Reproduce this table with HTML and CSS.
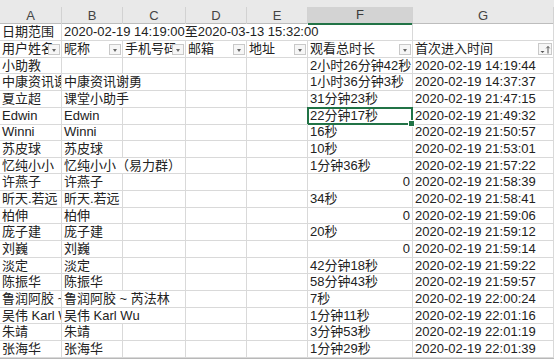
FILE: index.html
```html
<!DOCTYPE html>
<html lang="zh-CN">
<head>
<meta charset="utf-8">
<link rel="stylesheet" href="styles.css">
</head>
<body>
<div class="sheet">
  <div class="colhead">
    <div class="ch">A</div><div class="ch">B</div><div class="ch">C</div><div class="ch">D</div><div class="ch">E</div><div class="ch ch-active">F</div><div class="ch">G</div>
  </div>
  <div class="rows">
    <div class="row"><div class="c">日期范围</div><div class="c span5">2020-02-19 14:19:00至2020-03-13 15:32:00</div><div class="c"></div></div>
    <div class="row">
      <div class="c hdr">用户姓名<span class="filter"></span></div>
      <div class="c hdr">昵称<span class="filter"></span></div>
      <div class="c hdr">手机号码<span class="filter"></span></div>
      <div class="c hdr">邮箱<span class="filter"></span></div>
      <div class="c hdr">地址<span class="filter"></span></div>
      <div class="c hdr">观看总时长<span class="filter"></span></div>
      <div class="c hdr">首次进入时间<span class="filter sorted"><svg width="12" height="11" viewBox="0 0 12 11"><path d="M1.5 7h4l-2 2z" fill="#555"/><path d="M9 9.5V2.5M7.3 4.3L9 2.5l1.7 1.8" fill="none" stroke="#555" stroke-width="1"/></svg></span></div>
    </div>
    <div class="row"><div class="c">小助教</div><div class="c"></div><div class="c"></div><div class="c"></div><div class="c"></div><div class="c">2小时26分钟42秒</div><div class="c">2020-02-19 14:19:44</div></div>
    <div class="row"><div class="c">中康资讯谢勇</div><div class="c span2">中康资讯谢勇</div><div class="c"></div><div class="c"></div><div class="c">1小时36分钟3秒</div><div class="c">2020-02-19 14:37:37</div></div>
    <div class="row"><div class="c">夏立超</div><div class="c span2">课堂小助手</div><div class="c"></div><div class="c"></div><div class="c">31分钟23秒</div><div class="c">2020-02-19 21:47:15</div></div>
    <div class="row"><div class="c">Edwin</div><div class="c">Edwin</div><div class="c"></div><div class="c"></div><div class="c"></div><div class="c selected">22分钟17秒</div><div class="c">2020-02-19 21:49:32</div></div>
    <div class="row"><div class="c">Winni</div><div class="c">Winni</div><div class="c"></div><div class="c"></div><div class="c"></div><div class="c">16秒</div><div class="c">2020-02-19 21:50:57</div></div>
    <div class="row"><div class="c">苏皮球</div><div class="c">苏皮球</div><div class="c"></div><div class="c"></div><div class="c"></div><div class="c">10秒</div><div class="c">2020-02-19 21:53:01</div></div>
    <div class="row"><div class="c">忆纯小小</div><div class="c span2">忆纯小小（易力群）</div><div class="c"></div><div class="c"></div><div class="c">1分钟36秒</div><div class="c">2020-02-19 21:57:22</div></div>
    <div class="row"><div class="c">许燕子</div><div class="c">许燕子</div><div class="c"></div><div class="c"></div><div class="c"></div><div class="c num">0</div><div class="c">2020-02-19 21:58:39</div></div>
    <div class="row"><div class="c">昕天.若远</div><div class="c">昕天.若远</div><div class="c"></div><div class="c"></div><div class="c"></div><div class="c">34秒</div><div class="c">2020-02-19 21:58:41</div></div>
    <div class="row"><div class="c">柏伸</div><div class="c">柏伸</div><div class="c"></div><div class="c"></div><div class="c"></div><div class="c num">0</div><div class="c">2020-02-19 21:59:06</div></div>
    <div class="row"><div class="c">庞子建</div><div class="c">庞子建</div><div class="c"></div><div class="c"></div><div class="c"></div><div class="c">20秒</div><div class="c">2020-02-19 21:59:12</div></div>
    <div class="row"><div class="c">刘巍</div><div class="c">刘巍</div><div class="c"></div><div class="c"></div><div class="c"></div><div class="c num">0</div><div class="c">2020-02-19 21:59:14</div></div>
    <div class="row"><div class="c">淡定</div><div class="c">淡定</div><div class="c"></div><div class="c"></div><div class="c"></div><div class="c">42分钟18秒</div><div class="c">2020-02-19 21:59:22</div></div>
    <div class="row"><div class="c">陈振华</div><div class="c">陈振华</div><div class="c"></div><div class="c"></div><div class="c"></div><div class="c">58分钟43秒</div><div class="c">2020-02-19 21:59:57</div></div>
    <div class="row"><div class="c">鲁润阿胶 ~ 芮法林</div><div class="c span2">鲁润阿胶 ~ 芮法林</div><div class="c"></div><div class="c"></div><div class="c">7秒</div><div class="c">2020-02-19 22:00:24</div></div>
    <div class="row"><div class="c">吴伟 Karl Wu</div><div class="c span2">吴伟 Karl Wu</div><div class="c"></div><div class="c"></div><div class="c">1分钟11秒</div><div class="c">2020-02-19 22:01:16</div></div>
    <div class="row"><div class="c">朱靖</div><div class="c">朱靖</div><div class="c"></div><div class="c"></div><div class="c"></div><div class="c">3分钟53秒</div><div class="c">2020-02-19 22:01:19</div></div>
    <div class="row"><div class="c">张海华</div><div class="c">张海华</div><div class="c"></div><div class="c"></div><div class="c"></div><div class="c">1分钟29秒</div><div class="c">2020-02-19 22:01:39</div></div>
  </div>
  <div class="bottombar"></div>
</div>
</body>
</html>
```
FILE: styles.css
```css
html, body {
  margin: 0;
  padding: 0;
  background: #fff;
}
body {
  width: 554px;
  height: 359px;
  overflow: hidden;
  font-family: "Liberation Sans", "Noto Sans CJK SC", sans-serif;
  font-size: 13px;
  color: #222;
}
.sheet {
  display: flex;
  flex-direction: column;
  height: 359px;
}
.colhead,
.row {
  display: grid;
  grid-template-columns: 62px 61px 63px 61px 61px 105px 141px;
}
.colhead {
  background: #e9e9e9;
  padding-top: 7px;
  height: 24px;
  box-sizing: border-box;
  border-bottom: 1px solid #bdbdbd;
}
.ch {
  display: flex;
  align-items: center;
  justify-content: center;
  color: #444;
  font-size: 13px;
  border-right: 1px solid #d2d2d2;
  line-height: 16px;
}
.ch-active {
  background: #d3d3d3;
  border-bottom: 2px solid #217346;
  color: #3a3a3a;
  margin-bottom: -1px;
}
.rows {
  display: flex;
  flex-direction: column;
}
.row {
  height: 17px;
}
.row:nth-child(3n) {
  height: 16px;
}
.c {
  position: relative;
  box-sizing: border-box;
  border-right: 1px solid #d9d9d9;
  border-bottom: 1px solid #d9d9d9;
  padding: 0 2px;
  white-space: nowrap;
  overflow: hidden;
  display: flex;
  align-items: center;
  line-height: 16px;
}
.span5 {
  grid-column: span 5;
  overflow: visible;
}
.span2 {
  grid-column: span 2;
}
.num {
  justify-content: flex-end;
}
.filter {
  position: absolute;
  right: 1px;
  top: 3px;
  width: 12px;
  height: 11px;
  box-sizing: border-box;
  border: 1px solid #c9c9c9;
  background: #f6f6f6;
  display: flex;
  align-items: center;
  justify-content: center;
}
.filter::after {
  content: "";
  border-top: 3px solid #666;
  border-left: 2.5px solid transparent;
  border-right: 2.5px solid transparent;
  margin-top: 1px;
}
.filter.sorted {
  width: 14px;
  height: 12px;
  top: 2px;
}
.filter.sorted::after {
  display: none;
}
.selected {
  overflow: visible;
}
.selected::after {
  content: "";
  position: absolute;
  left: -1px;
  top: -1px;
  right: -1px;
  bottom: -1px;
  border: 2px solid #217346;
  pointer-events: none;
}
.selected::before {
  content: "";
  position: absolute;
  right: -3px;
  bottom: -3px;
  width: 5px;
  height: 5px;
  background: #217346;
  border: 1px solid #fff;
  z-index: 2;
}
.bottombar {
  flex: 1;
  background: #d0d0d0;
  border-top: 1px solid #b8b8b8;
}
```
